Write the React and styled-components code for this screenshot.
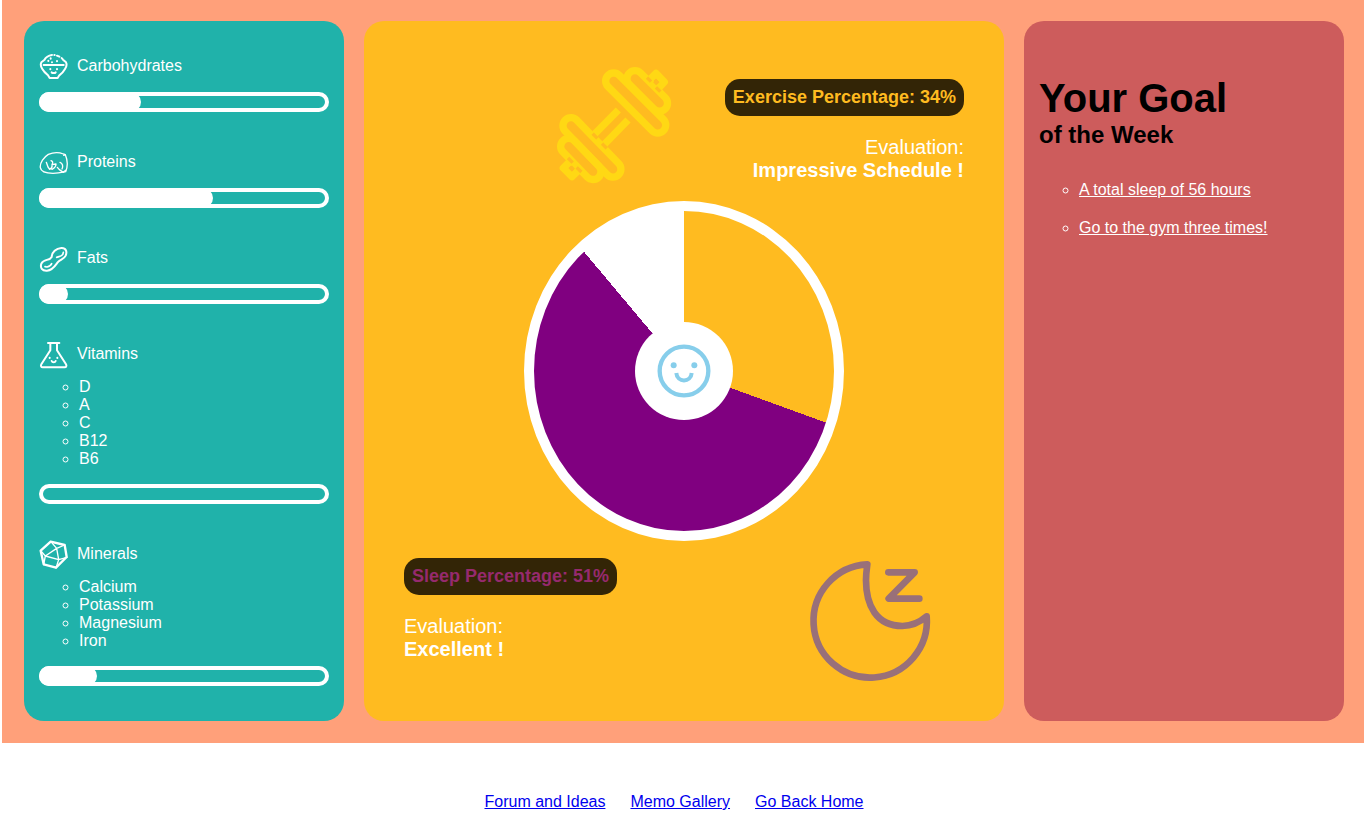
import React from "react";
import styled, { createGlobalStyle } from "styled-components";

const GlobalStyle = createGlobalStyle`
  * { box-sizing: border-box; }
  body {
    margin: 0;
    background: #fff;
    font-family: Arial, "Liberation Sans", sans-serif;
    font-size: 16px;
  }
`;

const Dashboard = styled.main`
  display: grid;
  grid-template-columns: minmax(0, 1fr) minmax(0, 2fr) minmax(0, 1fr);
  gap: 20px;
  margin-left: 2px;
  padding: 21px 20px 22px 22px;
  background: lightsalmon;
`;

const Panel = styled.section`
  border-radius: 20px;
  background: ${(p) => p.$color};
`;

const NutritionPanel = styled(Panel)`
  display: flex;
  flex-direction: column;
  gap: 35px;
  padding: 30px 15px 35px;
  color: #fff;
`;

const Nutrient = styled.div`
  display: flex;
  flex-direction: column;
`;

const NutrientHeader = styled.div`
  display: flex;
  align-items: center;
  gap: 8px;
  height: 30px;
`;

const NutrientIcon = styled.svg`
  width: 30px;
  height: 30px;
  fill: none;
  stroke: #fff;
  stroke-linecap: round;
  stroke-linejoin: round;
`;

const NutrientList = styled.ul`
  margin: 9px 0 5px;
  padding-left: 40px;
  list-style: circle;
  line-height: 18px;
`;

const Meter = styled.progress`
  display: block;
  appearance: none;
  width: 100%;
  height: 20px;
  margin-top: 11px;
  border: 0;
  border-radius: 10px;
  background: transparent;

  &::-webkit-progress-bar {
    border-radius: 10px;
    background: transparent;
    box-shadow: inset 0 0 0 4px #fff;
  }
  &::-webkit-progress-value {
    border-radius: 10px;
    background: #fff;
  }
`;

const ActivityPanel = styled(Panel)`
  display: flex;
  flex-direction: column;
  padding: 41px 40px;
`;

const ActivityRow = styled.div`
  display: flex;
  align-items: ${(p) => p.$align};
  justify-content: ${(p) => p.$justify};
  gap: 51px;
`;

const SleepRow = styled(ActivityRow)`
  padding-right: 34px;
`;

const ActivityArt = styled.svg`
  flex: none;
  width: 120px;
  height: 120px;
  overflow: visible;
  fill: none;
  stroke: ${(p) => p.$color};
`;

const ActivityText = styled.div`
  display: flex;
  flex-direction: column;
  align-items: ${(p) => p.$align};
  gap: 20px;
  text-align: ${(p) => p.$textAlign};
`;

const Badge = styled.div`
  padding: 8px;
  border-radius: 15px;
  background: rgba(0, 0, 0, 0.8);
  color: ${(p) => p.$color};
  font-size: 18px;
  font-weight: bold;
  line-height: 21px;
`;

const Evaluation = styled.p`
  margin: 0;
  color: #fff;
  font-size: 20px;
  line-height: 23px;

  strong { display: block; }
`;

const Donut = styled.div`
  display: flex;
  align-items: center;
  justify-content: center;
  align-self: center;
  width: 320px;
  height: 340px;
  margin: 19px 0 17px;
  border: 10px solid #fff;
  border-radius: 50%;
  background: conic-gradient(#ffbb20 110deg, purple 0 320deg, #fff 0);
`;

const DonutHole = styled.div`
  display: flex;
  align-items: center;
  justify-content: center;
  width: 98px;
  height: 98px;
  border-radius: 50%;
  background: #fff;
`;

const Smiley = styled.svg`
  width: 56px;
  height: 56px;
`;

const GoalPanel = styled(Panel)`
  padding: 54px 15px;
`;

const GoalTitle = styled.h1`
  margin: 0;
  font-size: 40px;
  line-height: 46px;

  small {
    display: block;
    font-size: 24px;
    line-height: 28px;
  }
`;

const GoalList = styled.ul`
  display: flex;
  flex-direction: column;
  gap: 20px;
  margin: 32px 0 0;
  padding-left: 40px;
  color: #fff;
  list-style: circle;
  line-height: 18px;
`;

const GoalLink = styled.a`
  color: #fff;
`;

const Footer = styled.footer`
  display: flex;
  justify-content: center;
  gap: 25px;
  padding: 50px 16px 0 0;
  line-height: 18px;
`;

const FooterLink = styled.a`
  color: #0000ee;
`;

const BowlIcon = () => (
  <NutrientIcon viewBox="117 153 90 90" strokeWidth="6" aria-hidden="true">
    <path d="M156 165C144 167 136 174 133 180L124 187C121 193 123 201 127 207C132 216 138 221 144 226L149 234H173L178 226C185 221 190 216 195 207C199 201 201 193 198 187L189 179L185 174M163 165H164M171 167L178 170M131 195H191" />
    <path d="M145 182V183M152 175V176M156 187V187M171 183V184M151 207V208M171 207V208M155 217C157 220 165 220 167 217" />
  </NutrientIcon>
);

const MeatIcon = () => (
  <NutrientIcon viewBox="117 441 90 90" strokeWidth="4" aria-hidden="true">
    <path d="M196 464C202 478 204 498 197 515C183 518 175 520 159 520C142 520 123 517 121 503C119 488 132 471 145 463C160 457 178 457 190 462L196 464L191 466" />
    <path d="M139 487L144 501L149 508C155 505 157 501 156 497M153 482C158 484 160 487 156 494L168 492C168 499 164 504 156 508M180 487C188 490 190 499 186 507M172 502L178 509L190 517L197 511" />
  </NutrientIcon>
);

const PeanutIcon = () => (
  <NutrientIcon viewBox="27 24 90 90" strokeWidth="6" aria-hidden="true">
    <path d="M65 66C66 51 78 40 94 39C108 38 112 50 107 62C102 73 90 73 83 82C75 93 68 106 51 107C36 108 30 98 34 86C41 70 58 79 65 66Z" />
    <path strokeWidth="5" d="M80 67L87 65C94 64 99 59 100 52M45 95L51 96C58 94 63 91 65 86" />
  </NutrientIcon>
);

const FlaskIcon = () => (
  <NutrientIcon viewBox="27 312 90 90" strokeWidth="6" aria-hidden="true">
    <path d="M54 324H88M61 326V346L34 388C31 393 34 397 38 397H104C108 397 111 393 108 388L81 346V326" />
    <path d="M59 368V369M82 368V369M65 378C67 383 75 383 77 378" />
  </NutrientIcon>
);

const CrystalIcon = () => (
  <NutrientIcon viewBox="27 192 90 90" strokeWidth="7" aria-hidden="true">
    <path d="M62 200L104 210L110 246L78 278L41 268L32 227Z" />
    <path
      strokeWidth="4"
      d="M80 220L46 243L86 254ZM62 199L80 220L104 210M32 227L46 243L41 269M78 279L86 254L111 247"
    />
  </NutrientIcon>
);

const Dumbbell = () => (
  <ActivityArt viewBox="42 36 360 360" $color="#ffd814" strokeWidth="22" aria-hidden="true">
    <rect x="-24" y="-24" width="235" height="48" rx="24" transform="translate(221 93) rotate(45)" />
    <rect x="-24" y="-24" width="152" height="48" rx="24" transform="translate(285 86) rotate(45)" />
    <rect x="-24" y="-24" width="229" height="48" rx="24" transform="translate(93 227) rotate(46)" />
    <rect x="-24" y="-24" width="153" height="48" rx="24" transform="translate(86 289) rotate(46)" />
    <path d="M235 180L164 252M264 210L194 282" />
    <path strokeLinejoin="round" d="M331 87L348 70L373 96L357 113M87 337L70 354L96 380L112 364" />
    <g stroke="#ffbb20" strokeWidth="10">
      <path d="M321 83L333 95M348 112L361 125M158 251L172 265M186 281L200 295M84 324L98 338M110 352L124 366" />
      <path strokeWidth="13" d="M344 92L353 101M91 351L100 360" />
    </g>
  </ActivityArt>
);

const Moon = () => (
  <ActivityArt
    viewBox="61 38 360 360"
    $color="#997079"
    strokeWidth="20"
    strokeLinecap="round"
    strokeLinejoin="round"
    aria-hidden="true"
  >
    <path d="M233 57A170 170 0 1 0 411 213C388 233 365 242 338 242C260 242 229 180 229 105C229 85 231 72 233 57Z" />
    <path d="M296 81H375L297 160H389" />
  </ActivityArt>
);

const nutrients = [
  { name: "Carbohydrates", Icon: BowlIcon, value: 35 },
  { name: "Proteins", Icon: MeatIcon, value: 60 },
  { name: "Fats", Icon: PeanutIcon, value: 10 },
  { name: "Vitamins", Icon: FlaskIcon, value: 0, items: ["D", "A", "C", "B12", "B6"] },
  {
    name: "Minerals",
    Icon: CrystalIcon,
    value: 20,
    items: ["Calcium", "Potassium", "Magnesium", "Iron"],
  },
];

export default function App() {
  return (
    <>
      <GlobalStyle />
      <Dashboard>
        <NutritionPanel $color="lightseagreen">
          {nutrients.map(({ name, Icon, value, items }) => (
            <Nutrient key={name}>
              <NutrientHeader>
                <Icon />
                <label htmlFor={name}>{name}</label>
              </NutrientHeader>
              {items && (
                <NutrientList>
                  {items.map((item) => (
                    <li key={item}>{item}</li>
                  ))}
                </NutrientList>
              )}
              <Meter id={name} max="100" value={value} />
            </Nutrient>
          ))}
        </NutritionPanel>

        <ActivityPanel $color="#ffbb20">
          <ActivityRow $align="flex-end" $justify="flex-end">
            <Dumbbell />
            <ActivityText $align="flex-end" $textAlign="right">
              <Badge $color="#ffbb20">Exercise Percentage: 34%</Badge>
              <Evaluation>
                Evaluation:
                <strong>Impressive Schedule !</strong>
              </Evaluation>
            </ActivityText>
          </ActivityRow>
          <Donut>
            <DonutHole>
              <Smiley viewBox="468 457 168 168" fill="none" stroke="skyblue" aria-hidden="true">
                <circle cx="552" cy="541" r="73" strokeWidth="13" />
                <circle cx="521" cy="524" r="9" fill="skyblue" stroke="none" />
                <circle cx="583" cy="524" r="9" fill="skyblue" stroke="none" />
                <path d="M529 547C531 577 573 577 575 547" strokeWidth="12" />
              </Smiley>
            </DonutHole>
          </Donut>
          <SleepRow $align="flex-start" $justify="space-between">
            <ActivityText $align="flex-start" $textAlign="left">
              <Badge $color="#962a6e">Sleep Percentage: 51%</Badge>
              <Evaluation>
                Evaluation:
                <strong>Excellent !</strong>
              </Evaluation>
            </ActivityText>
            <Moon />
          </SleepRow>
        </ActivityPanel>

        <GoalPanel $color="indianred">
          <GoalTitle>
            Your Goal
            <small>of the Week</small>
          </GoalTitle>
          <GoalList>
            <li>
              <GoalLink href="#sleep">A total sleep of 56 hours</GoalLink>
            </li>
            <li>
              <GoalLink href="#gym">Go to the gym three times!</GoalLink>
            </li>
          </GoalList>
        </GoalPanel>
      </Dashboard>
      <Footer>
        <FooterLink href="#forum">Forum and Ideas</FooterLink>
        <FooterLink href="#gallery">Memo Gallery</FooterLink>
        <FooterLink href="#home">Go Back Home</FooterLink>
      </Footer>
    </>
  );
}
